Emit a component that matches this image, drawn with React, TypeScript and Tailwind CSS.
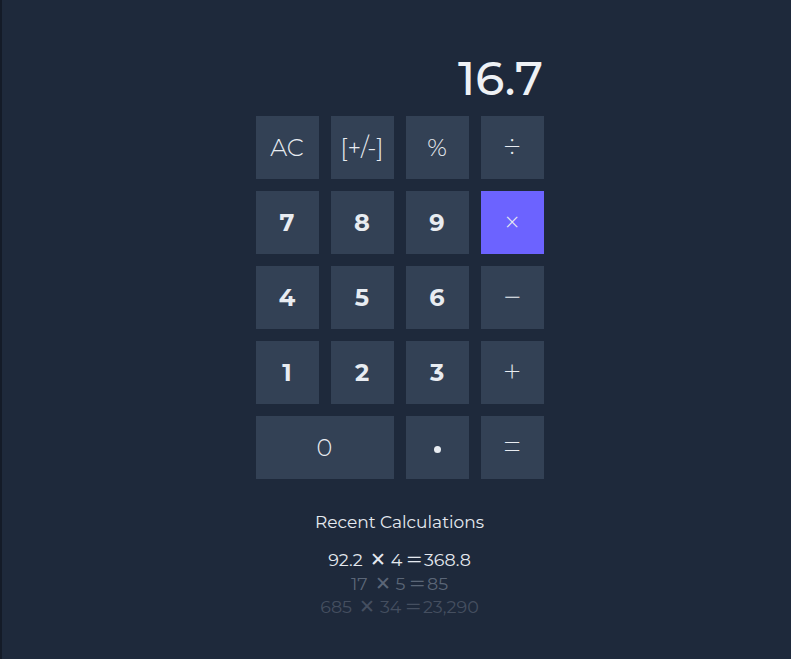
import React from "react";

const font = { fontFamily: "Montserrat, Inter, 'Noto Sans', 'Noto Sans CJK SC', sans-serif" };

type Key = { label: string; bold?: boolean; wide?: boolean; accent?: boolean; op?: boolean; dot?: boolean };

const keys: Key[] = [
  { label: "AC" },
  { label: "[+/-]" },
  { label: "%" },
  { label: "÷", op: true },
  { label: "7", bold: true },
  { label: "8", bold: true },
  { label: "9", bold: true },
  { label: "×", accent: true, op: true },
  { label: "4", bold: true },
  { label: "5", bold: true },
  { label: "6", bold: true },
  { label: "−", op: true },
  { label: "1", bold: true },
  { label: "2", bold: true },
  { label: "3", bold: true },
  { label: "+", op: true },
  { label: "0", wide: true },
  { label: "", dot: true },
  { label: "=", op: true },
];

const history = [
  { a: "92.2", b: "4", r: "368.8", cls: "text-[#e5e9f0]" },
  { a: "17", b: "5", r: "85", cls: "text-[#5b6677]" },
  { a: "685", b: "34", r: "23,290", cls: "text-[#454f60]" },
];

export default function App() {
  return (
    <div className="min-h-[659px] w-full bg-[#1e293b] border-l-2 border-[#141b28] flex justify-center pl-[6px]" style={font}>
      <div className="flex flex-col items-center pt-[53px]">
        <div className="w-[287px] flex justify-end text-[47px] leading-[52px] text-[#eef1f5] font-medium">
          16.7
        </div>
        <div className="mt-[11px] grid grid-cols-[repeat(4,63px)] auto-rows-[63px] gap-x-[12px] gap-y-[12px]">
          {keys.map((k, i) => (
            <div
              key={i}
              className={
                "flex items-center justify-center text-[#e8ecf1] " +
                (k.wide ? "col-span-2 " : "") +
                (k.accent ? "bg-[#6c63ff] " : "bg-[#334155] ") +
                (k.bold ? "font-bold text-[24px] " : k.op ? "font-extralight text-[34px] " : "font-light text-[24px] ")
              }
            >
              {k.dot ? <div className="w-[7px] h-[7px] rounded-full bg-[#e8ecf1] mt-[4px]" /> : k.label}
            </div>
          ))}
        </div>
        <div className="mt-[31px] text-[17px] leading-[24px] text-[#e5e9f0] font-normal">Recent Calculations</div>
        <div className="mt-[14px] flex flex-col items-center text-[17.5px] leading-[23.5px]">
          {history.map((h, i) => (
            <div key={i} className={h.cls + " flex items-center"}>
              <span>{h.a}</span>
              <span className="ml-[7px] mr-[5px] text-[19px] font-light">✕</span>
              <span>{h.b}</span>
              <span className="ml-[3px] mr-[1px]">＝</span>
              <span>{h.r}</span>
            </div>
          ))}
        </div>
      </div>
    </div>
  );
}
